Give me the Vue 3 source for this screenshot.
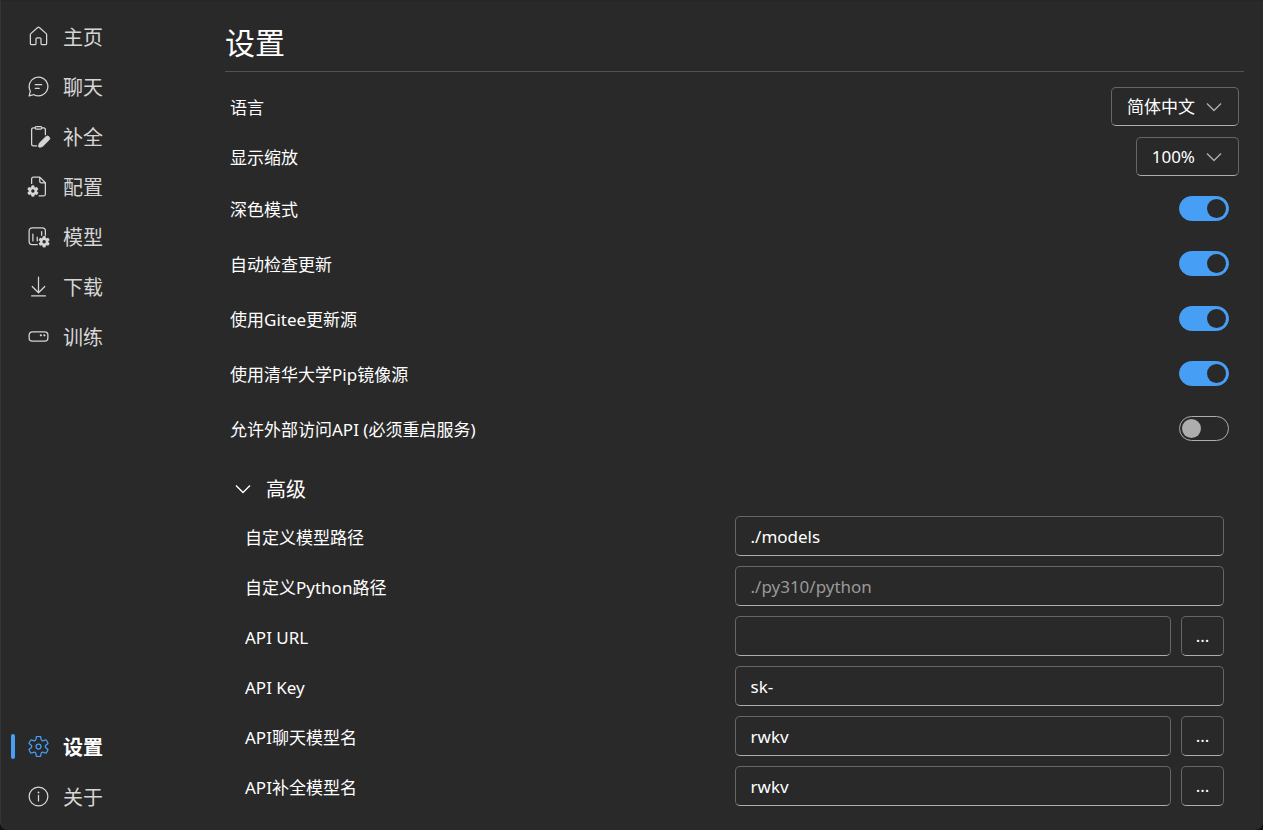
<script setup>
import { reactive, ref } from 'vue'

const gear =
  'M1.91 7.38A8.5 8.5 0 0 1 3.7 4.3a.5.5 0 0 1 .54-.13l1.92.68a1 1 0 0 0 1.32-.76l.36-2a.5.5 0 0 1 .4-.4 8.53 8.53 0 0 1 3.55 0c.2.04.35.2.38.4l.37 2a1 1 0 0 0 1.32.76l1.92-.68a.5.5 0 0 1 .54.13 8.5 8.5 0 0 1 1.78 3.08c.06.2 0 .4-.15.54l-1.56 1.32a1 1 0 0 0 0 1.52l1.56 1.32a.5.5 0 0 1 .15.54 8.5 8.5 0 0 1-1.78 3.08.5.5 0 0 1-.54.13l-1.92-.68a1 1 0 0 0-1.32.76l-.37 2a.5.5 0 0 1-.38.4 8.53 8.53 0 0 1-3.56 0 .5.5 0 0 1-.39-.4l-.36-2a1 1 0 0 0-1.32-.76l-1.92.68a.5.5 0 0 1-.54-.13 8.5 8.5 0 0 1-1.78-3.08.5.5 0 0 1 .15-.54l1.56-1.32a1 1 0 0 0 0-1.52L2.06 7.92a.5.5 0 0 1-.15-.54Z'
const gearInner =
  'm1.06 0 1.3 1.1a2 2 0 0 1 0 3.04l-1.3 1.1c.3.79.72 1.51 1.25 2.16l1.6-.58a2 2 0 0 1 2.63 1.53l.3 1.67a7.56 7.56 0 0 0 2.5 0l.3-1.67a2 2 0 0 1 2.64-1.53l1.6.57a7.5 7.5 0 0 0 1.24-2.15l-1.3-1.1a2 2 0 0 1 0-3.04l1.3-1.1a7.5 7.5 0 0 0-1.25-2.16l-1.6.58a2 2 0 0 1-2.63-1.53l-.3-1.67a7.55 7.55 0 0 0-2.5 0l-.3 1.67A2 2 0 0 1 5.81 5.8l-1.6-.58a7.5 7.5 0 0 0-1.24 2.16ZM7.5 10a2.5 2.5 0 1 1 5 0 2.5 2.5 0 0 1-5 0Zm1 0a1.5 1.5 0 1 0 3 0 1.5 1.5 0 0 0-3 0Z'
const gearHole = 'M7.5 10a2.5 2.5 0 1 0 5 0 2.5 2.5 0 0 0-5 0Z'

const icons = {
  home: [{ d: 'M9 2.39a1.5 1.5 0 0 1 2 0l5.5 4.94c.32.28.5.69.5 1.12v7.05c0 .83-.67 1.5-1.5 1.5H13a1.5 1.5 0 0 1-1.5-1.5V12a.5.5 0 0 0-.5-.5H9a.5.5 0 0 0-.5.5v3.5c0 .83-.67 1.5-1.5 1.5H4.5A1.5 1.5 0 0 1 3 15.5V8.45c0-.43.18-.84.5-1.12L9 2.39Zm1.33.74a.5.5 0 0 0-.66 0l-5.5 4.94a.5.5 0 0 0-.17.38v7.05c0 .28.22.5.5.5H7a.5.5 0 0 0 .5-.5V12c0-.83.67-1.5 1.5-1.5h2c.83 0 1.5.67 1.5 1.5v3.5c0 .28.22.5.5.5h2.5a.5.5 0 0 0 .5-.5V8.45a.5.5 0 0 0-.17-.38l-5.5-4.94Z' }],
  chat: [{ d: 'M10 2a8 8 0 1 1-3.61 15.14l-.12-.07-3.65.92a.5.5 0 0 1-.62-.45v-.08l.01-.08.92-3.64-.07-.12a7.95 7.95 0 0 1-.83-2.9l-.02-.37L2 10a8 8 0 0 1 8-8Zm0 1a7 7 0 0 0-6.1 10.42.5.5 0 0 1 .06.28l-.02.1-.75 3.01 3.02-.75a.5.5 0 0 1 .19-.01l.09.02.09.04A7 7 0 1 0 10 3Zm.5 8a.5.5 0 0 1 .09 1H7.5a.5.5 0 0 1-.09-1h3.09Zm2-3a.5.5 0 0 1 .09 1H7.5a.5.5 0 0 1-.09-1h5.09Z' }],
  completion: [
    { line: true, d: 'M7.5 3H6A1.500 1.500 0 0 0 4.500 4.500v11.500a1.500 1.500 0 0 0 1.500 1.500h2.500M12.500 3h1.500A1.500 1.500 0 0 1 15.500 4.500v4M8.300 2h3.400a1 1 0 0 1 0 2H8.300a1 1 0 0 1 0-2Z' },
    { d: 'M15.8 10.2a1.87 1.87 0 0 1 2.65 2.65l-4.83 4.82c-.28.28-.63.48-1.02.58l-1.5.37a.9.9 0 0 1-1.1-1.1l.38-1.5c.1-.38.3-.73.58-1.01l4.84-4.81Z', bold: true }
  ],
  config: [
    { line: true, d: 'M4.500 7.500V4A1.500 1.500 0 0 1 6 2.500h5L15.500 7v9a1.500 1.500 0 0 1-1.500 1.500h-3.500M11 2.500v3A1.500 1.500 0 0 0 12.500 7h3' },
    { d: gear + gearHole, transform: 'translate(.1 8.2) scale(.54)' }
  ],
  model: [
    { line: true, d: 'M9 16.500H5A2.500 2.500 0 0 1 2.500 14V5.500A2.500 2.500 0 0 1 5 3H13A2.500 2.500 0 0 1 15.500 5.500V9M5.500 8v5.500M9 10.500v3M12.500 6v3' },
    { d: gear + gearHole, transform: 'translate(9.1 8.8) scale(.54)' }
  ],
  download: [{ line: true, d: 'M10 2.5v12M5 10l5 5 5-5M4.500 17.500h11' }],
  train: [
    { line: true, d: 'M5 6.250h10a2.500 2.500 0 0 1 2.500 2.500v2.500a2.500 2.500 0 0 1-2.500 2.500H5a2.500 2.500 0 0 1-2.500-2.500v-2.500A2.500 2.500 0 0 1 5 6.250Z' },
    { d: 'M11 9a.9.9 0 1 0 1.800 0 .9.9 0 0 0-1.800 0ZM13.800 9a.9.9 0 1 0 1.800 0 .9.9 0 0 0-1.800 0Z' }
  ],
  settings: [{ d: gear + gearInner }],
  about: [
    { line: true, d: 'M2.500 10a7.500 7.500 0 1 0 15 0 7.500 7.500 0 0 0-15 0ZM10 9v4.500' },
    { d: 'M9.250 6.750a.75.75 0 1 0 1.500 0 .75.75 0 0 0-1.500 0Z' }
  ]
}

const nav = [
  [
    { icon: 'home', text: '主页' },
    { icon: 'chat', text: '聊天' },
    { icon: 'completion', text: '补全' },
    { icon: 'config', text: '配置' },
    { icon: 'model', text: '模型' },
    { icon: 'download', text: '下载' },
    { icon: 'train', text: '训练' }
  ],
  [
    { icon: 'settings', text: '设置' },
    { icon: 'about', text: '关于' }
  ]
]
const current = ref('settings')

const selects = reactive([
  { id: 'language', label: '语言', value: '简体中文', options: ['简体中文', 'English', '日本語'] },
  { id: 'scale', label: '显示缩放', value: '100%', options: ['75%', '100%', '125%', '150%'] }
])
const switches = reactive([
  { id: 'dark', label: '深色模式', on: true },
  { id: 'update', label: '自动检查更新', on: true },
  { id: 'gitee', label: '使用Gitee更新源', on: true },
  { id: 'pip', label: '使用清华大学Pip镜像源', on: true },
  { id: 'host', label: '允许外部访问API (必须重启服务)', on: false }
])
const fields = reactive([
  { id: 'models', label: '自定义模型路径', value: './models' },
  { id: 'python', label: '自定义Python路径', value: '', placeholder: './py310/python' },
  { id: 'url', label: 'API URL', value: '', more: true },
  { id: 'key', label: 'API Key', value: 'sk-' },
  { id: 'chatModel', label: 'API聊天模型名', value: 'rwkv', more: true },
  { id: 'completionModel', label: 'API补全模型名', value: 'rwkv', more: true }
])
const open = ref(true)
</script>

<template>
  <div class="window">
    <nav class="side">
      <div v-for="(group, g) in nav" :key="g" class="group">
        <button
          v-for="item in group"
          :key="item.icon"
          type="button"
          class="tab"
          :class="{ active: item.icon === current }"
          @click="current = item.icon"
        >
          <span class="mark"></span>
          <svg class="icon" viewBox="0 0 20 20" aria-hidden="true">
            <path
              v-for="(p, i) in icons[item.icon]"
              :key="i"
              :d="p.d"
              :transform="p.transform"
              :class="[p.line ? 'line' : 'solid', { bold: p.bold }]"
            />
          </svg>
          <span class="name">{{ item.text }}</span>
        </button>
      </div>
    </nav>

    <main class="page">
      <h1>设置</h1>
      <div class="list selects">
        <div v-for="s in selects" :key="s.id" class="row">
          <label :for="s.id">{{ s.label }}</label>
          <div class="dropdown">
            <select :id="s.id" v-model="s.value">
              <option v-for="o in s.options" :key="o">{{ o }}</option>
            </select>
            <svg class="chevron" viewBox="0 0 16 10" aria-hidden="true"><path d="M1 1.500 8 8.500 15 1.500" /></svg>
          </div>
        </div>
      </div>
      <div class="list switches">
        <div v-for="s in switches" :key="s.id" class="row">
          <label :for="s.id">{{ s.label }}</label>
          <input :id="s.id" v-model="s.on" type="checkbox" role="switch" class="switch" />
        </div>
      </div>

      <section class="advanced">
        <button type="button" class="toggle" :aria-expanded="open" @click="open = !open">
          <svg class="chevron" viewBox="0 0 16 10" aria-hidden="true"><path d="M1 1.500 8 8.500 15 1.500" /></svg>
          <span class="name">高级</span>
        </button>
        <div v-show="open" class="panel">
          <div v-for="f in fields" :key="f.id" class="field">
            <label :for="f.id">{{ f.label }}</label>
            <div class="controls">
              <input :id="f.id" v-model="f.value" type="text" class="text" :placeholder="f.placeholder" />
              <button v-if="f.more" type="button" class="more" :aria-label="f.label">...</button>
            </div>
          </div>
        </div>
      </section>
    </main>
  </div>
</template>

<style>
body {
  background: #101114;
}
</style>

<style scoped>
.window {
  box-sizing: border-box;
  display: flex;
  min-height: 100vh;
  padding: 15px 19px 14px 10px;
  gap: 15px;
  border-top: 1px solid #20272e;
  border-left: 1px solid #343639;
  border-radius: 0 0 8px 8px;
  background: #292929;
  color: #fff;
  font: 17px/24px "Noto Sans", "Noto Sans CJK SC", sans-serif;
}
button,
input,
select {
  font: inherit;
  color: inherit;
  box-sizing: border-box;
  margin: 0;
}
/* Optical centring: the CJK glyphs sit high in the line box */
label,
.name {
  padding-top: 3px;
}
.side {
  flex: 0 0 199px;
  display: flex;
  flex-direction: column;
  justify-content: space-between;
}
.group {
  display: flex;
  flex-direction: column;
  gap: 10px;
}
.tab {
  display: flex;
  align-items: center;
  height: 40px;
  padding: 0;
  border: 0;
  background: none;
  color: #d6d6d6;
  font-size: 20px;
  text-align: left;
}
.mark {
  width: 4px;
  height: 25px;
  border-radius: 2px;
  margin-right: 11px;
}
.icon {
  width: 25px;
  height: 25px;
  margin-right: 12px;
}
.solid {
  fill: currentColor;
  fill-rule: evenodd;
}
.bold {
  stroke: currentColor;
  stroke-width: 0.6;
}
.line {
  fill: none;
  stroke: currentColor;
  stroke-width: 1;
  stroke-linecap: round;
  stroke-linejoin: round;
}
.active {
  color: #fff;
  font-weight: 700;
}
.active .mark {
  background: #479ef5;
}
.active .icon {
  color: #479ef5;
}
.page {
  flex: 1;
  min-width: 0;
}
h1 {
  margin: 0;
  padding: 4px 0 6px;
  border-bottom: 1px solid #525252;
  font-size: 30px;
  line-height: 45px;
  font-weight: 400;
}
.list {
  display: grid;
  gap: 10px;
  padding: 0 5px;
}
.selects {
  gap: 11px;
  margin: 15px 0 10px;
}
.row {
  display: flex;
  align-items: center;
  justify-content: space-between;
}
.dropdown {
  display: grid;
  align-items: center;
}
.dropdown > * {
  grid-area: 1 / 1;
}
select {
  appearance: none;
  field-sizing: content;
  height: 39px;
  padding: 0 43px 0 15px;
  border: 1px solid #666;
  border-bottom-color: #adadad;
  border-radius: 5px;
  background: #292929;
}
.chevron {
  width: 16px;
  height: 10px;
  fill: none;
  stroke: currentColor;
  stroke-width: 1.4;
}
.dropdown .chevron {
  justify-self: end;
  margin-right: 17px;
  color: #adadad;
  pointer-events: none;
}
.switches .row {
  min-height: 45px;
  padding-right: 10px;
}
.switch {
  appearance: none;
  display: flex;
  align-items: center;
  width: 50px;
  height: 25px;
  padding: 0 2px;
  border: 1px solid #adadad;
  border-radius: 13px;
}
.switch::before {
  content: "";
  width: 19px;
  height: 19px;
  border-radius: 50%;
  background: #adadad;
}
.switch:checked {
  justify-content: flex-end;
  border-color: #479ef5;
  background: #479ef5;
}
.switch:checked::before {
  background: #292929;
}
.advanced {
  padding: 10px 5px 0;
}
.toggle {
  display: flex;
  align-items: center;
  gap: 15px;
  width: 100%;
  height: 55px;
  padding: 0 5px;
  border: 0;
  background: none;
  font-size: 20px;
}
.panel {
  display: grid;
  gap: 10px;
  padding: 0 15px;
}
.field {
  display: grid;
  grid-template-columns: 1fr 1fr;
  align-items: center;
}
.controls {
  display: flex;
  gap: 10px;
}
.text {
  flex: 1;
  min-width: 0;
  height: 40px;
  padding: 0 15px;
  border: 1px solid #666;
  border-bottom-color: #adadad;
  border-radius: 5px;
  background: none;
}
.text::placeholder {
  color: #999;
  opacity: 1;
}
.more {
  width: 43px;
  height: 40px;
  padding: 0;
  border: 1px solid #666;
  border-bottom-color: #adadad;
  border-radius: 5px;
  background: none;
}
</style>
